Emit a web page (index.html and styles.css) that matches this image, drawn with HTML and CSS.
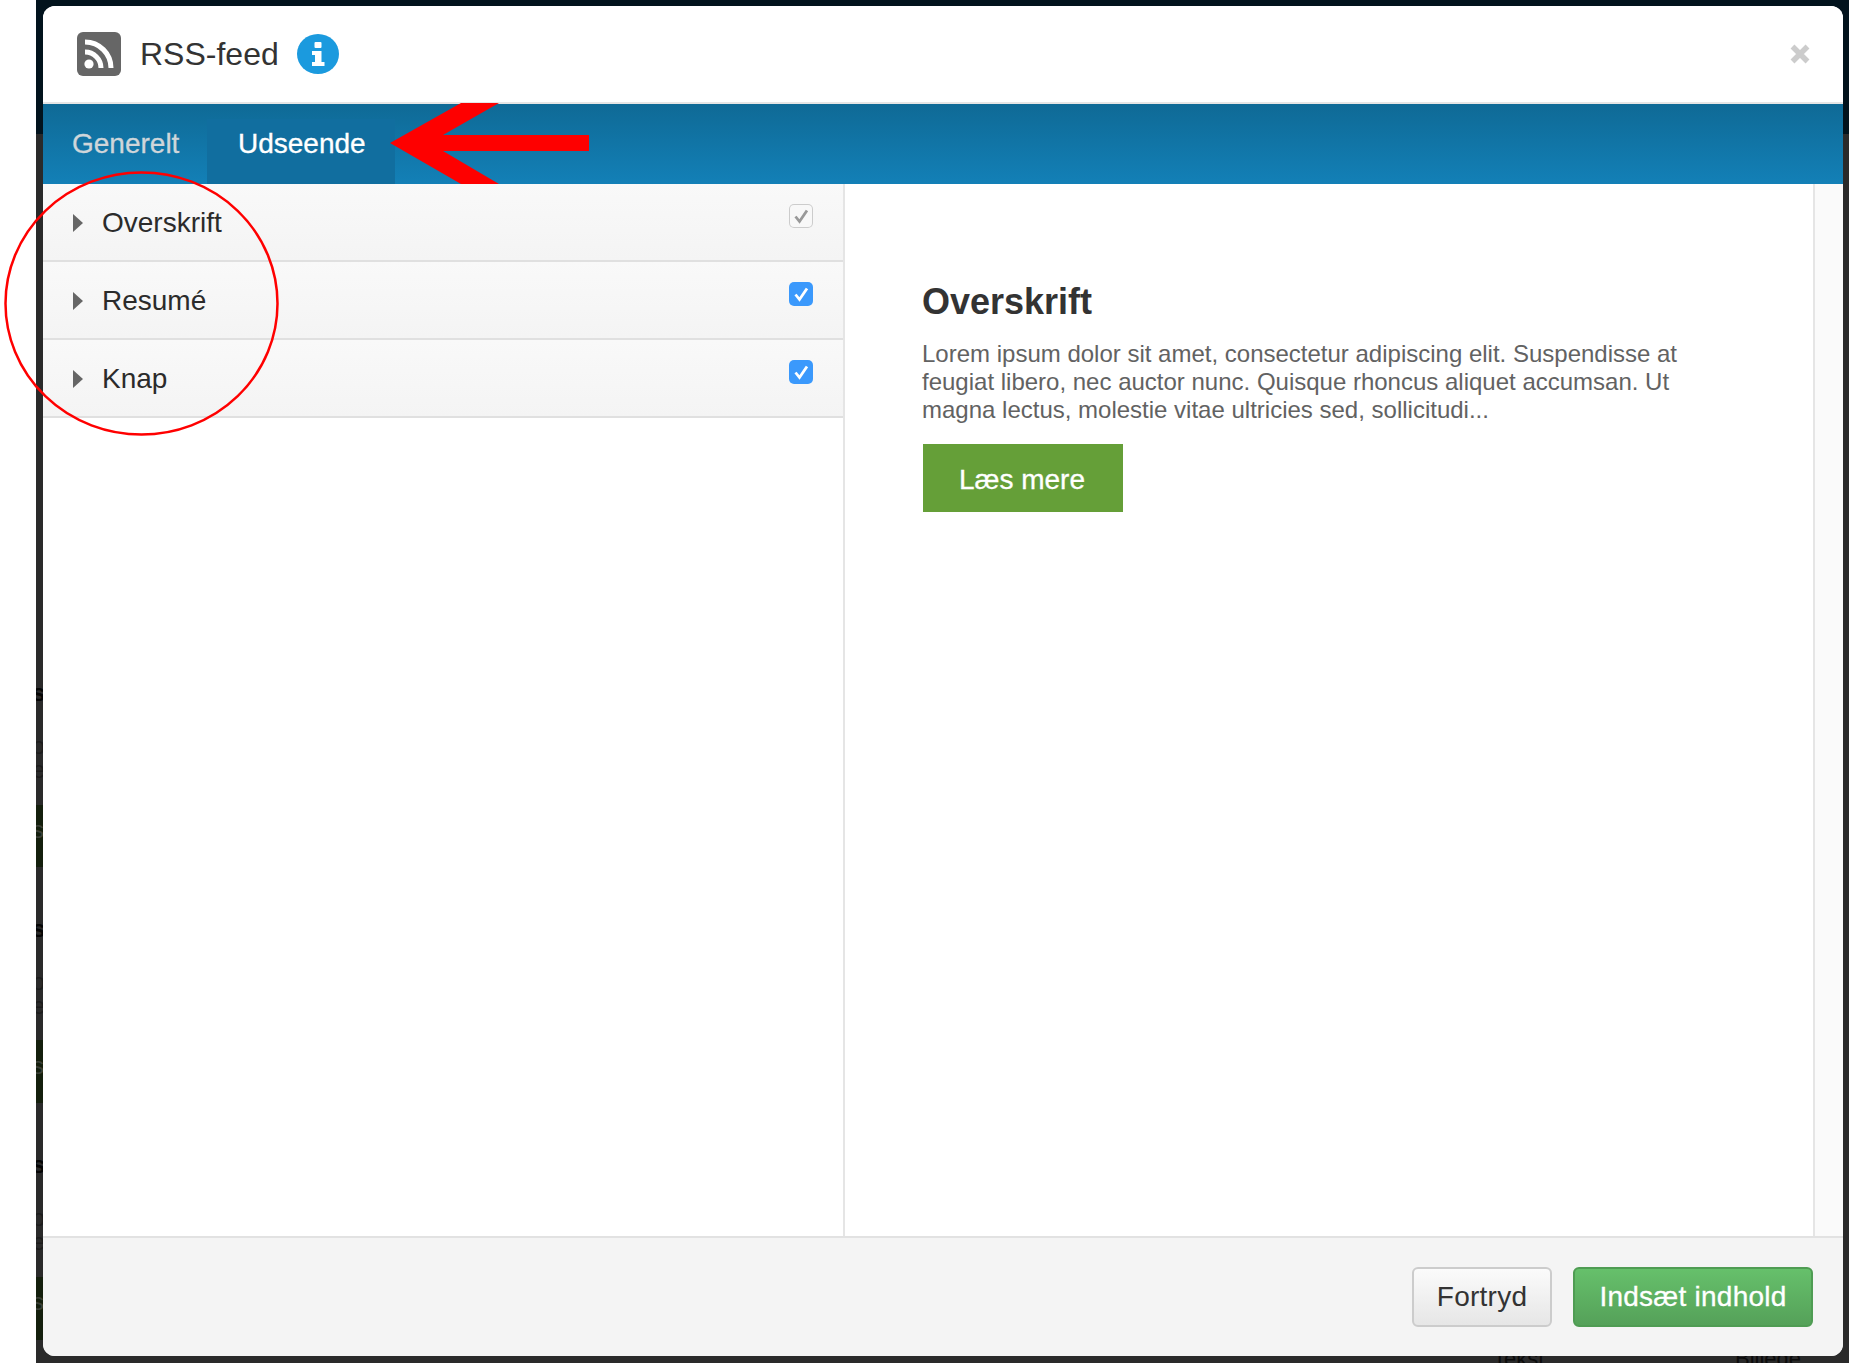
FILE: index.html
```html
<!DOCTYPE html>
<html lang="en">
<head>
<meta charset="UTF-8">
<title>RSS-feed</title>
<link rel="stylesheet" href="styles.css">
</head>
<body>
<div class="backdrop">
  <div class="side-letters">
    <span class="strong">s</span><span>o</span><span>e</span><span class="faint">s</span>
    <span class="strong">s</span><span>o</span><span>e</span><span class="faint">s</span>
    <span class="strong">s</span><span>o</span><span>e</span><span class="faint">s</span>
  </div>
  <span class="behind behind-text">Tekst</span>
  <span class="behind behind-image">Billede</span>

  <div class="modal">
    <div class="modal-header">
      <svg class="rss-icon" viewBox="0 0 44 44">
        <rect width="44" height="44" rx="6" fill="#666"/>
        <circle cx="12" cy="32" r="4.600" fill="#fff"/>
        <path d="M8 20a16 16 0 0 1 16 16" fill="none" stroke="#fff" stroke-width="5"/>
        <path d="M8 10a26 26 0 0 1 26 26" fill="none" stroke="#fff" stroke-width="5"/>
      </svg>
      <h1 class="modal-title">RSS-feed</h1>
      <svg class="info-icon" viewBox="0 0 42 40">
        <ellipse cx="21" cy="20" rx="21" ry="20" fill="#1b9ade"/>
        <rect x="17.500" y="8" width="7" height="6" rx="1" fill="#fff"/>
        <path d="M15 17h9.500v11h3v4H15v-4h3v-7h-3z" fill="#fff"/>
      </svg>
      <svg class="close-icon" viewBox="0 0 20 20">
        <path d="M2.500 2.500l15 15M17.500 2.500l-15 15" stroke="#ccc" stroke-width="5.500"/>
      </svg>
    </div>

    <div class="tabs">
      <a class="tab">Generelt</a>
      <a class="tab active">Udseende</a>
    </div>

    <div class="modal-body">
      <div class="options">
        <div class="option">
          <span class="caret"></span>
          <span class="option-label">Overskrift</span>
          <span class="check disabled">
            <svg viewBox="0 0 24 24"><path d="M6.500 12.500l4 5L18 6.500" fill="none" stroke="#999" stroke-width="2.800"/></svg>
          </span>
        </div>
        <div class="option">
          <span class="caret"></span>
          <span class="option-label">Resumé</span>
          <span class="check">
            <svg viewBox="0 0 24 24"><path d="M6.500 12.500l4 5L18 6.500" fill="none" stroke="#fff" stroke-width="2.800"/></svg>
          </span>
        </div>
        <div class="option">
          <span class="caret"></span>
          <span class="option-label">Knap</span>
          <span class="check">
            <svg viewBox="0 0 24 24"><path d="M6.500 12.500l4 5L18 6.500" fill="none" stroke="#fff" stroke-width="2.800"/></svg>
          </span>
        </div>
      </div>

      <div class="preview">
        <h2>Overskrift</h2>
        <p>Lorem ipsum dolor sit amet, consectetur adipiscing elit. Suspendisse at<br>feugiat libero, nec auctor nunc. Quisque rhoncus aliquet accumsan. Ut<br>magna lectus, molestie vitae ultricies sed, sollicitudi...</p>
        <a class="read-more">Læs mere</a>
      </div>

      <div class="gutter"></div>
    </div>

    <div class="modal-footer">
      <button class="btn btn-cancel">Fortryd</button>
      <button class="btn btn-insert">Indsæt indhold</button>
    </div>
  </div>
</div>

<svg class="annotations" viewBox="0 0 1849 1363">
  <path d="M390 143L461 103H499L443 135H589V151H443L499 184H461Z" fill="#fe0000"/>
  <ellipse cx="141.500" cy="303.500" rx="136" ry="131" fill="none" stroke="#f00" stroke-width="2.500"/>
</svg>
</body>
</html>
```

FILE: styles.css
```css
html, body {
  margin: 0;
  padding: 0;
  background-color: #fff;
}

body {
  position: relative;
  width: 1849px;
  height: 1363px;
  overflow: hidden;
  font-family: "Liberation Sans", Arial, sans-serif;
}

.backdrop {
  position: relative;
  box-sizing: border-box;
  height: 1363px;
  margin-left: 36px;
  padding: 6px 6px 7px 7px;
  overflow: hidden;
  background:
    linear-gradient(to bottom, transparent 805px, #141f0d 805px, #141f0d 867px, transparent 867px, transparent 1040px, #141f0d 1040px, #141f0d 1103px, transparent 1103px, transparent 1277px, #141f0d 1277px, #141f0d 1340px, transparent 1340px) left top / 7px 100% no-repeat,
    linear-gradient(to bottom, #02131d 0, #02131d 134px, #2a2a2a 134px);
}

/* page behind the dialog, only a sliver of it shows */
.side-letters {
  position: absolute;
  left: -4px;
  top: 680px;
  display: grid;
  grid-template-rows: 53px 24px 60px 99px 53px 24px 60px 99px 53px 24px 60px;
  font-size: 24px;
  line-height: 26px;
  color: #1c1c1c;
}

.side-letters .strong {
  font-weight: bold;
  color: #050505;
}

.side-letters .faint {
  color: #3a3f36;
}

.behind {
  position: absolute;
  bottom: -10px;
  font-size: 22px;
  line-height: 28px;
  color: #0c0c0c;
}

.behind-text {
  left: 1457px;
}

.behind-image {
  left: 1699px;
}

.modal {
  position: relative;
  display: flex;
  flex-direction: column;
  height: 100%;
  border-radius: 12px;
  overflow: hidden;
  background-color: #fff;
}

.modal-header {
  display: flex;
  align-items: center;
  box-sizing: border-box;
  height: 98px;
  padding: 0 33px 0 34px;
  background-color: #fff;
  border-bottom: 2px solid #e5e5e5;
}

.rss-icon {
  width: 44px;
  height: 44px;
}

.modal-title {
  margin: 0 19px;
  font-size: 32px;
  font-weight: normal;
  color: #333;
}

.info-icon {
  width: 42px;
  height: 40px;
  margin-left: -1px;
}

.close-icon {
  width: 20px;
  height: 20px;
  margin-left: auto;
}

.tabs {
  display: flex;
  height: 80px;
  background: linear-gradient(to bottom, #0f6a96, #1380b7);
}

.tab {
  display: flex;
  align-items: center;
  box-sizing: border-box;
  padding: 0 30px 0 29px;
  font-size: 28px;
  color: #cfd6da;
  -webkit-text-stroke: 0.3px;
}

.tab:first-child {
  width: 164px;
}

.tab.active {
  width: 188px;
  margin-top: 15px;
  padding-bottom: 15px;
  padding-left: 31px;
  color: #fff;
  background-color: #116e9f;
}

.modal-body {
  display: flex;
  flex: 1;
  min-height: 0;
}

.options {
  width: 800px;
  border-right: 2px solid #e5e5e5;
}

.option {
  display: flex;
  align-items: flex-start;
  box-sizing: border-box;
  height: 78px;
  padding: 0 30px;
  background: linear-gradient(to bottom, #f9f9f9, #f4f4f4);
  border-bottom: 2px solid #e0e0e0;
}

.caret {
  width: 0;
  height: 0;
  margin-top: 30px;
  border-style: solid;
  border-width: 9px 0 9px 10px;
  border-color: transparent transparent transparent #666;
}

.option-label {
  margin-left: 19px;
  font-size: 28px;
  line-height: 77px;
  color: #2b2b2b;
}

.check {
  display: block;
  box-sizing: border-box;
  width: 24px;
  height: 24px;
  margin-top: 20px;
  margin-left: auto;
  border-radius: 5px;
  background-color: #3b99fc;
}

.check svg {
  display: block;
  width: 100%;
  height: 100%;
}

.check.disabled {
  background-color: #f8f8f8;
  box-shadow: inset 0 0 0 1px #ccc;
}

.preview {
  flex: 1;
  padding: 98px 0 0 78px;
}

.preview h2 {
  margin: 0 0 0 -1px;
  font-size: 36px;
  line-height: 40px;
  font-weight: bold;
  color: #333;
}

.preview p {
  margin: 18px 0 20px -1px;
  font-size: 24px;
  line-height: 28px;
  color: #626262;
}

.read-more {
  display: block;
  box-sizing: border-box;
  width: 200px;
  height: 68px;
  padding-right: 2px;
  font-size: 28px;
  line-height: 72px;
  text-align: center;
  color: #fff;
  background-color: #659f38;
  -webkit-text-stroke: 0.3px;
}

.gutter {
  width: 28px;
  border-left: 2px solid #e5e5e5;
  background-color: #fafafa;
}

.modal-footer {
  display: flex;
  justify-content: flex-end;
  align-items: center;
  gap: 21px;
  box-sizing: border-box;
  height: 120px;
  padding: 0 30px 0 0;
  background-color: #f4f4f4;
  border-top: 2px solid #e2e2e2;
}

.btn {
  box-sizing: border-box;
  height: 60px;
  padding: 0;
  font-family: inherit;
  font-size: 28px;
  letter-spacing: 0.25px;
  border-radius: 6px;
}

.btn-cancel {
  width: 140px;
  color: #333;
  background: linear-gradient(to bottom, #fbfbfb, #e6e6e6);
  border: 2px solid #cccccc;
}

.btn-insert {
  width: 240px;
  color: #fff;
  background: linear-gradient(to bottom, #66c06b, #55a159);
  border: 2px solid #4f9c53;
  -webkit-text-stroke: 0.3px;
}

.annotations {
  position: absolute;
  left: 0;
  top: 0;
  width: 1849px;
  height: 1363px;
}
```
